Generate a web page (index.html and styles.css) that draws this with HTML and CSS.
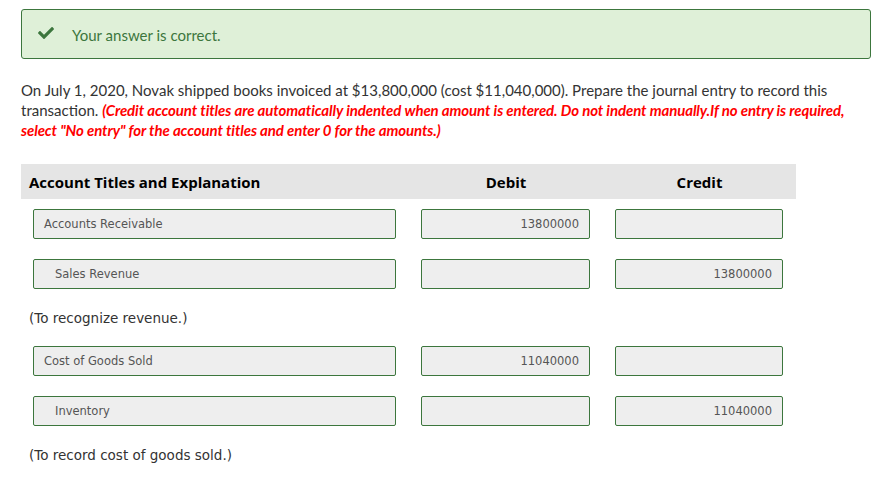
FILE: index.html
```html
<!DOCTYPE html>
<html>
<head>
<meta charset="utf-8">
<link rel="stylesheet" href="styles.css">
</head>
<body>
<div class="page">
  <div class="alert">
    <svg class="check" viewBox="0 0 512 512" width="16" height="16"><path fill="#3c763d" d="M173.898 439.404l-166.4-166.4c-9.997-9.997-9.997-26.206 0-36.204l36.203-36.204c9.997-9.998 26.207-9.998 36.204 0L192 312.69 432.095 72.596c9.997-9.997 26.207-9.997 36.204 0l36.203 36.204c9.997 9.997 9.997 26.206 0 36.204l-294.4 294.401c-9.998 9.997-26.207 9.997-36.204-.001z"/></svg>
    <span>Your answer is correct.</span>
  </div>
  <p class="question">On July 1, 2020, Novak shipped books invoiced at $13,800,000 (cost $11,040,000). Prepare the journal entry to record this transaction. <em class="note">(Credit account titles are automatically indented when amount is entered. Do not indent manually.If no entry is required, select "No entry" for the account titles and enter 0 for the amounts.)</em></p>
  <div class="journal">
    <div class="row head">
      <div class="cell title">Account Titles and Explanation</div>
      <div class="cell center">Debit</div>
      <div class="cell center">Credit</div>
    </div>
    <div class="row">
      <div class="cell"><div class="field">Accounts Receivable</div></div>
      <div class="cell"><div class="field num">13800000</div></div>
      <div class="cell"><div class="field num"></div></div>
    </div>
    <div class="row">
      <div class="cell"><div class="field indent">Sales Revenue</div></div>
      <div class="cell"><div class="field num"></div></div>
      <div class="cell"><div class="field num">13800000</div></div>
    </div>
    <div class="explain">(To recognize revenue.)</div>
    <div class="row">
      <div class="cell"><div class="field">Cost of Goods Sold</div></div>
      <div class="cell"><div class="field num">11040000</div></div>
      <div class="cell"><div class="field num"></div></div>
    </div>
    <div class="row">
      <div class="cell"><div class="field indent">Inventory</div></div>
      <div class="cell"><div class="field num"></div></div>
      <div class="cell"><div class="field num">11040000</div></div>
    </div>
    <div class="explain">(To record cost of goods sold.)</div>
  </div>
</div>
</body>
</html>
```

FILE: styles.css
```css
html, body {
  margin: 0;
  padding: 0;
  background: #fff;
}
.page {
  padding: 9px 0 0 21px;
  width: 850px;
}
.alert {
  box-sizing: border-box;
  height: 50px;
  border: 1px solid #3c763d;
  border-radius: 3px;
  background: #dff0d8;
  color: #3c763d;
  font-family: Lato, "Liberation Sans", sans-serif;
  font-size: 15px;
  display: flex;
  align-items: center;
  padding-left: 16px;
}
.check {
  margin-right: 18px;
  margin-top: -3px;
}
.alert span {
  margin-top: 1px;
}
.question {
  margin: 21px 0 0 0;
  font-family: Lato, "Liberation Sans", sans-serif;
  font-size: 15px;
  line-height: 20px;
  color: #333;
}
.note {
  color: #f00;
  font-weight: bold;
  font-style: italic;
  letter-spacing: -0.1px;
}
.journal {
  margin-top: 24px;
  width: 775px;
  font-family: "DejaVu Sans", Verdana, sans-serif;
}
.row {
  display: grid;
  grid-template-columns: 388px 194px 193px;
  padding: 10px 0;
}
.row.head {
  background: #e5e5e5;
  height: 35px;
  padding: 0;
  align-items: center;
  font-family: "Open Sans", sans-serif;
  font-weight: bold;
  font-size: 15px;
  color: #000;
}
.cell {
  padding: 0 13px 0 12px;
}
.head .cell.title {
  padding-left: 8px;
}
.head .center {
  text-align: center;
  padding: 0;
}
.field {
  box-sizing: border-box;
  height: 30px;
  border: 1px solid #3c763d;
  border-radius: 2px;
  background: #eee;
  color: #555;
  font-size: 11.5px;
  line-height: 28px;
  padding: 0 10px;
}
.field.indent {
  padding-left: 21px;
}
.field.num {
  text-align: right;
}
.explain {
  height: 37px;
  line-height: 39px;
  padding-left: 8px;
  font-size: 13.5px;
  color: #333;
}
```
